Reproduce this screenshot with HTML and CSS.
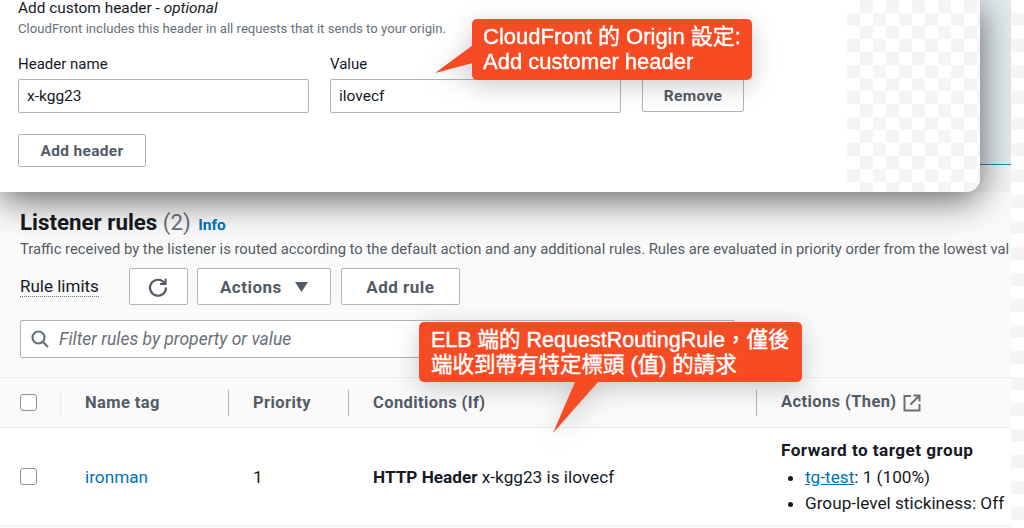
FILE: index.html
```html
<!DOCTYPE html>
<html lang="en">
<head>
    <meta charset="UTF-8">
    <meta name="viewport" content="width=device-width, initial-scale=1.0">
    <title>Listener rules</title>
    <link rel="stylesheet" href="styles.css">
</head>
<body>
    <div class="page">
        <main class="console">
            <!-- CloudFront dialog on top of the ELB page -->
            <div class="top">
                <div class="dialog">
                    <form class="dialog-form">
                        <div class="legend">Add custom header - <em>optional</em></div>
                        <div class="hint">CloudFront includes this header in all requests that it sends to your origin.</div>
                        <div class="header-row">
                            <div class="field">
                                <label>Header name</label>
                                <div class="input">x-kgg23</div>
                            </div>
                            <div class="field">
                                <label>Value</label>
                                <div class="input">ilovecf</div>
                            </div>
                            <button type="button" class="btn btn-remove">Remove</button>
                        </div>
                        <button type="button" class="btn btn-add-header">Add header</button>
                    </form>
                    <div class="checker"></div>
                </div>
                <div class="backdrop"></div>
            </div>

            <section class="rules">
                <h2>Listener rules <span class="count">(2)</span> <a class="info">Info</a></h2>
                <p class="desc">Traffic received by the listener is routed according to the default action and any additional rules. Rules are evaluated in priority order from the lowest val</p>
                <div class="toolbar">
                    <span class="limits">Rule limits</span>
                    <button type="button" class="btn btn-refresh" aria-label="Refresh">
                        <svg width="20" height="20" viewBox="0 0 20 20" fill="none" stroke="#545b64" stroke-width="2.2">
                            <path d="M16.6 6.2A8 8 0 1 0 18 10.5"/>
                            <path d="M17.6 1.6v5.5h-5.5" stroke-width="2"/>
                        </svg>
                    </button>
                    <button type="button" class="btn btn-actions">Actions
                        <svg width="13" height="10" viewBox="0 0 13 10"><path d="M0 0h13L6.5 10z" fill="#545b64"/></svg>
                    </button>
                    <button type="button" class="btn btn-add-rule">Add rule</button>
                </div>
                <div class="search">
                    <svg width="18" height="18" viewBox="0 0 18 18" fill="none" stroke="#687078" stroke-width="2.2">
                        <circle cx="7.5" cy="7.5" r="6"/>
                        <path d="M12 12l5 5"/>
                    </svg>
                    <span>Filter rules by property or value</span>
                </div>
            </section>

            <table class="rules-table">
                <colgroup>
                    <col class="col-check">
                    <col class="col-name">
                    <col class="col-priority">
                    <col class="col-cond">
                    <col>
                </colgroup>
                <thead>
                    <tr>
                        <th class="cell-check"><span class="checkbox"></span></th>
                        <th><div class="th-inner th-faint">Name tag</div></th>
                        <th><div class="th-inner">Priority</div></th>
                        <th><div class="th-inner">Conditions (If)</div></th>
                        <th><div class="th-inner th-actions"><span class="th-actions-label">Actions (Then)</span>
                            <svg width="18" height="18" viewBox="0 0 18 18" fill="none" stroke="#687078" stroke-width="2">
                                <path d="M8 2H1.5v14.5h15V10"/>
                                <path d="M10.5 1.5h6v6M16.5 1.5L7.5 10.5"/>
                            </svg>
                        </div></th>
                    </tr>
                </thead>
                <tbody>
                    <tr>
                        <td class="cell-check"><span class="checkbox"></span></td>
                        <td class="td-pad"><a class="name-link">ironman</a></td>
                        <td class="td-pad">1</td>
                        <td class="td-pad"><b>HTTP Header</b> x-kgg23 is ilovecf</td>
                        <td class="td-pad td-actions">
                            <b class="forward">Forward to target group</b>
                            <ul>
                                <li><a class="tg-link">tg-test</a>: 1 (100%)</li>
                                <li>Group-level stickiness: Off</li>
                            </ul>
                        </td>
                    </tr>
                </tbody>
            </table>
        </main>
        <div class="checker strip"></div>

        <!-- annotations -->
        <div class="callout callout-origin">
            <svg class="tail tail-left" width="40" height="32" viewBox="0 0 40 32"><path d="M38 0v18L0 28z" fill="#f74b24"/></svg>
            CloudFront 的 Origin 設定:<br>Add customer header
        </div>
        <div class="callout callout-elb">
            <svg class="tail tail-down" width="46" height="52" viewBox="0 0 46 52"><path d="M22 0h23L0 51z" fill="#f74b24"/></svg>
            ELB 端的 RequestRoutingRule&#65292;僅後<br>端收到帶有特定標頭 (值) 的請求
        </div>
    </div>
</body>
</html>
```

FILE: styles.css
```css
* {
    box-sizing: border-box;
}
body {
    margin: 0;
    font-family: Roboto, "Noto Sans CJK TC", sans-serif;
    color: #16191f;
    background-color: #fff;
}
.page {
    position: relative;
    display: flex;
    width: 1024px;
    height: 528px;
    overflow: hidden;
}
.console {
    width: 1011px;
    flex-shrink: 0;
    overflow: hidden;
    background-color: #fafafa;
}
.checker {
    background-color: #fff;
    background-image: conic-gradient(#f5f5f5 25%, transparent 0 50%, #f5f5f5 0 75%, transparent 0);
    background-size: 26px 26px;
}
.strip {
    flex: 1;
}

/* dialog */
.top {
    display: flex;
    height: 192px;
    background-color: #f4f4f4;
}
.dialog {
    position: relative;
    z-index: 1;
    display: flex;
    width: 980px;
    background-color: #fff;
    border-bottom-right-radius: 14px;
    box-shadow: 0 8px 36px rgba(0, 0, 0, 0.6);
}
.dialog-form {
    width: 847px;
    padding-left: 18px;
}
.dialog > .checker {
    flex: 1;
    border-bottom-right-radius: 14px;
}
.backdrop {
    flex: 1;
    height: 165px;
    background-color: #e2ebef;
    border-bottom: 1px solid #2e86c1;
}
.legend {
    font-size: 15.4px;
    line-height: 16px;
}
.hint {
    margin-top: 4px;
    font-size: 13.15px;
    line-height: 18px;
    color: #687078;
}
.header-row {
    display: flex;
    align-items: flex-start;
    gap: 21px;
    margin-top: 16px;
}
.field {
    display: flex;
    flex-direction: column;
    width: 291px;
}
.field label {
    font-size: 15px;
    line-height: 20px;
    margin-bottom: 5px;
}
.input {
    height: 34px;
    padding: 0 8px;
    border: 1px solid #aab7b8;
    border-radius: 2px;
    font-size: 15.5px;
    line-height: 32px;
    background-color: #fff;
}
.btn {
    display: inline-flex;
    align-items: center;
    justify-content: center;
    border: 1px solid #aab7b8;
    border-radius: 2px;
    background-color: #fff;
    color: #545b64;
    font-family: inherit;
    font-size: 15.5px;
    font-weight: 700;
    letter-spacing: 0.3px;
    padding: 0;
}
.btn-remove {
    width: 102px;
    height: 33px;
    margin-top: 25px;
}
.btn-add-header {
    width: 128px;
    height: 33px;
    margin-top: 21px;
}

/* listener rules */
.rules {
    height: 185px;
    padding: 16px 0 0 20px;
    overflow: hidden;
}
.rules h2 {
    margin: 0;
    font-size: 22.3px;
    line-height: 28px;
    font-weight: 700;
}
.count {
    font-weight: 400;
    color: #687078;
}
.info {
    margin-left: 2px;
    font-size: 15.5px;
    color: #0073bb;
}
.desc {
    margin: 1px 0 0;
    font-size: 14.8px;
    line-height: 18px;
    color: #545b64;
    white-space: nowrap;
}
.toolbar {
    display: flex;
    align-items: center;
    margin-top: 10px;
}
.limits {
    font-size: 17px;
    line-height: 20px;
    border-bottom: 1px dotted #687078;
    margin-right: 30px;
}
.toolbar .btn {
    height: 37px;
    margin-right: 9px;
    font-size: 17px;
    letter-spacing: 0.5px;
}
.btn-refresh {
    width: 59px;
}
.toolbar .btn-actions {
    width: 134px;
    margin-right: 10px;
    gap: 13px;
}
.btn-add-rule {
    width: 119px;
}
.search {
    display: flex;
    align-items: center;
    gap: 10px;
    width: 715px;
    height: 38px;
    margin-top: 15px;
    padding-left: 10px;
    border: 1px solid #aab7b8;
    border-radius: 2px;
    background-color: #fff;
    font-size: 17.5px;
    font-style: italic;
    color: #687078;
}

/* table */
.rules-table {
    width: 100%;
    border-collapse: collapse;
    table-layout: fixed;
    font-size: 17.2px;
}
.col-check {
    width: 60px;
}
.col-name {
    width: 168px;
}
.col-priority {
    width: 120px;
}
.col-cond {
    width: 408px;
}
.rules-table th {
    height: 50px;
    padding: 0;
    text-align: left;
    background-color: #fafafa;
    border-top: 1px solid #eaeded;
    border-bottom: 1px solid #eaeded;
    color: #545b64;
    font-size: 16.5px;
    letter-spacing: 0.4px;
}
.rules-table td {
    height: 98px;
    background-color: #fff;
    border-bottom: 1px solid #eaeded;
}
.rules-table .cell-check {
    padding-left: 20px;
}
.checkbox {
    display: block;
    width: 17px;
    height: 17px;
    border: 1px solid #879596;
    border-radius: 3px;
    background-color: #fff;
}
.th-inner {
    display: flex;
    align-items: center;
    gap: 6px;
    height: 26px;
    padding-left: 24px;
    border-left: 1px solid #aab7b8;
}
.th-faint {
    border-left-color: #eaeded;
}
.th-actions-label {
    margin-bottom: 2px;
}
.td-pad {
    padding-left: 25px;
}
.rules-table .td-actions {
    padding-top: 3px;
}
.forward {
    letter-spacing: 0.45px;
}
.name-link {
    color: #0073bb;
}
.tg-link {
    color: #0073bb;
    text-decoration: underline;
}
.rules-table ul {
    margin: 4px 0 0;
    padding-left: 24px;
}
.rules-table li {
    line-height: 26px;
}

/* annotations */
.callout {
    position: absolute;
    z-index: 2;
    padding: 6px 11px;
    border-radius: 5px;
    background-color: #f74b24;
    color: #fff;
    font-family: "Liberation Sans", "Noto Sans CJK TC", sans-serif;
    font-size: 22px;
    line-height: 24.5px;
    white-space: nowrap;
    -webkit-text-stroke: 0.4px #fff;
    filter: drop-shadow(0 6px 12px rgba(0, 0, 0, 0.2));
}
.callout-origin {
    left: 472px;
    top: 19px;
    width: 280px;
    height: 61px;
}
.callout-elb {
    left: 419px;
    top: 322px;
    width: 383px;
    height: 60px;
    padding-left: 12px;
    font-size: 21.5px;
}
.tail {
    position: absolute;
}
.tail-left {
    left: -37px;
    top: 26px;
}
.tail-down {
    left: 134px;
    top: 60px;
}
```
